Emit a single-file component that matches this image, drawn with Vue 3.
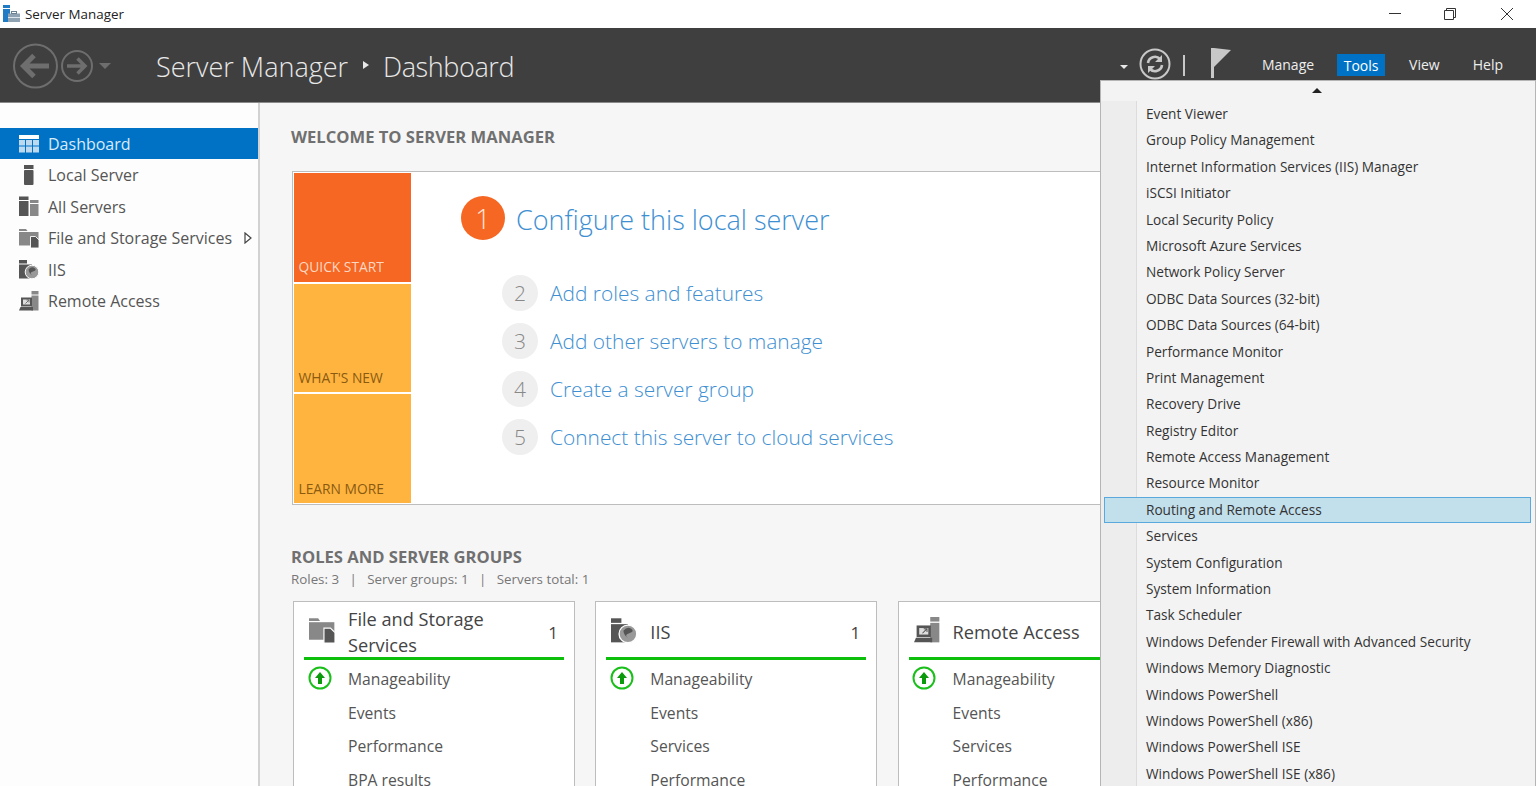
<script setup>
const navItems = [
  { label: 'Dashboard', icon: 'dash', active: true },
  { label: 'Local Server', icon: 'local' },
  { label: 'All Servers', icon: 'all' },
  { label: 'File and Storage Services', icon: 'file', arrow: true },
  { label: 'IIS', icon: 'iis' },
  { label: 'Remote Access', icon: 'remote' }
]
const tiles = [
  { label: 'QUICK START', cls: 'orange' },
  { label: "WHAT'S NEW", cls: 'amber' },
  { label: 'LEARN MORE', cls: 'amber' }
]
const steps = [
  { n: 2, text: 'Add roles and features' },
  { n: 3, text: 'Add other servers to manage' },
  { n: 4, text: 'Create a server group' },
  { n: 5, text: 'Connect this server to cloud services' }
]
const cards = [
  { title: 'File and Storage Services', icon: 'file', count: '1', rows: ['Manageability', 'Events', 'Performance', 'BPA results'] },
  { title: 'IIS', icon: 'iis', count: '1', rows: ['Manageability', 'Events', 'Services', 'Performance'] },
  { title: 'Remote Access', icon: 'remote', count: '', rows: ['Manageability', 'Events', 'Services', 'Performance'] }
]
const tools = [
  'Event Viewer', 'Group Policy Management', 'Internet Information Services (IIS) Manager', 'iSCSI Initiator',
  'Local Security Policy', 'Microsoft Azure Services', 'Network Policy Server', 'ODBC Data Sources (32-bit)',
  'ODBC Data Sources (64-bit)', 'Performance Monitor', 'Print Management', 'Recovery Drive', 'Registry Editor',
  'Remote Access Management', 'Resource Monitor', 'Routing and Remote Access', 'Services', 'System Configuration',
  'System Information', 'Task Scheduler', 'Windows Defender Firewall with Advanced Security',
  'Windows Memory Diagnostic', 'Windows PowerShell', 'Windows PowerShell (x86)', 'Windows PowerShell ISE',
  'Windows PowerShell ISE (x86)'
]
</script>

<template>
  <div class="app">
    <svg width="0" height="0" class="defs">
      <defs>
        <symbol id="i-dash" viewBox="0 0 20 20">
          <rect x="0" y="1" width="20" height="4" fill="#fff"/>
          <g fill="#bcd9ef">
            <rect x="0" y="6" width="6" height="5.5"/><rect x="7" y="6" width="6" height="5.5"/><rect x="14" y="6" width="6" height="5.5"/>
            <rect x="0" y="12.5" width="6" height="6"/><rect x="7" y="12.5" width="6" height="6"/><rect x="14" y="12.5" width="6" height="6"/>
          </g>
        </symbol>
        <symbol id="i-local" viewBox="0 0 20 20">
          <rect x="5" y="0" width="9.500" height="4" fill="#555"/><rect x="5" y="5" width="9.500" height="15" rx="1" fill="#555"/>
        </symbol>
        <symbol id="i-all" viewBox="0 0 20 20">
          <rect x="0" y="0.500" width="9.500" height="3.500" fill="#555"/><rect x="0" y="5" width="9.500" height="15" fill="#555"/>
          <rect x="11" y="4" width="8.500" height="3" fill="#888"/><rect x="11" y="8" width="8.500" height="12" fill="#888"/>
        </symbol>
        <symbol id="i-file" viewBox="0 0 20 20">
          <path d="M0 1h7l1.500 2H0z" fill="#888"/><path d="M0 4h19.500v13.500H0z" fill="#888"/>
          <path d="M11.500 8.500h5l3.500 3.500v8h-8.500z" fill="#555" stroke="#fdfdfd" stroke-width=".9"/>
        </symbol>
        <symbol id="i-iis" viewBox="0 0 20 20">
          <rect x="0" y="1" width="8" height="3.500" fill="#555"/><rect x="0" y="5.500" width="13" height="14" fill="#555"/>
          <circle cx="13" cy="13" r="6.800" fill="#999" stroke="#fdfdfd"/>
          <path d="M9.500 10.500q3-3.500 6-1.500t-1.500 3.500-.5 4q-3.500-2-4-6z" fill="#555"/>
        </symbol>
        <symbol id="i-remote" viewBox="0 0 20 20">
          <rect x="12.500" y="0" width="7" height="3.500" fill="#888"/><rect x="12.500" y="4.500" width="7" height="15" fill="#888"/>
          <path d="M2 6.500h11v9H2z" fill="#555"/><rect x="4" y="8.500" width="7" height="5" fill="#ddd"/>
          <path d="M1.500 16h12.500v3.500H0z" fill="#555"/><path d="M6.500 12.500l3-3M7.500 9h2.500v2.500" stroke="#555" fill="none" stroke-width=".8"/>
        </symbol>
      </defs>
    </svg>

    <div class="titlebar">
      <svg class="app-icon" width="18" height="18" viewBox="0 0 18 18">
        <rect x="1" y="0" width="7" height="3" fill="#1f7bc4"/>
        <rect x="1" y="4" width="7" height="13" fill="#1f7bc4"/>
        <rect x="6" y="8.500" width="12" height="8.500" fill="#8fa3b3"/>
        <rect x="9.500" y="6.500" width="5" height="2" fill="none" stroke="#6b8294"/>
        <rect x="6" y="12" width="12" height="1" fill="#dfe7ee"/>
      </svg>
      <span class="app-name">Server Manager</span>
      <div class="winbtns">
        <svg width="14" height="14" viewBox="0 0 14 14"><path d="M1 6.500h12" stroke="#333"/></svg>
        <svg width="14" height="14" viewBox="0 0 14 14"><path d="M1.500 3.500h9v9h-9zM3.500 3.500v-2h9v9h-2" fill="none" stroke="#333"/></svg>
        <svg class="close-ico" width="14" height="14" viewBox="0 0 14 14"><path d="M1 1l12 12M13 1L1 13" stroke="#333" fill="none"/></svg>
      </div>
    </div>

    <header class="header">
      <svg class="nav-back" width="100" height="50" viewBox="0 0 100 50">
        <g fill="none" stroke="#6e6e6e">
          <circle cx="22.500" cy="25" r="21.500" stroke-width="2"/>
          <path d="M36 25H12M21 14.500L10.500 25 21 35.500" stroke-width="5"/>
          <circle cx="64" cy="25" r="15" stroke-width="2"/>
          <path d="M54 25h17M64.500 17.500L72 25l-7.500 7.500" stroke-width="3.500"/>
        </g>
        <path d="M86 22h12l-6 6z" fill="#6e6e6e"/>
      </svg>
      <h1 class="crumb">
        <span>Server Manager</span>
        <i class="crumb-sep"></i>
        <span class="crumb-last">Dashboard</span>
      </h1>
      <div class="tools-right">
        <i class="dd"></i>
        <svg class="refresh" width="32" height="32" viewBox="0 0 32 32">
          <circle cx="16" cy="16" r="14.500" fill="none" stroke="#c8c8c8" stroke-width="2"/>
          <path d="M9 15a7 7 0 0 1 12-4M23 17a7 7 0 0 1-12 4" fill="none" stroke="#c8c8c8" stroke-width="2.600"/>
          <path d="M23 7v7h-7zM9 25v-7h7z" fill="#c8c8c8"/>
        </svg>
        <i class="vsep"></i>
        <svg class="flag" width="22" height="30" viewBox="0 0 22 30">
          <path d="M1 0h3v30H1z" fill="#c8c8c8"/><path d="M4 0l17 2L4 19z" fill="#c8c8c8"/>
        </svg>
        <nav class="menu">
          <span class="m-manage">Manage</span><span class="on">Tools</span><span class="m-view">View</span><span>Help</span>
        </nav>
      </div>
    </header>

    <div class="body">
      <aside class="side">
        <div v-for="n in navItems" :key="n.label" class="nav" :class="{ active: n.active }">
          <svg class="nav-ico" width="20" height="20"><use :href="'#i-' + n.icon"/></svg>
          <span>{{ n.label }}</span>
          <svg v-if="n.arrow" class="nav-arrow" width="8" height="12" viewBox="0 0 8 12"><path d="M1 1l6 5-6 5z" fill="#fff" stroke="#444" stroke-width="1.200"/></svg>
        </div>
      </aside>

      <main class="main">
        <h2 class="h-welcome">WELCOME TO SERVER MANAGER</h2>
        <section class="welcome">
          <div class="tiles">
            <div v-for="t in tiles" :key="t.label" class="tile" :class="t.cls">{{ t.label }}</div>
          </div>
          <div class="steps">
            <div class="step-main">
              <span class="num-big">1</span>
              <span class="big-link">Configure this local server</span>
            </div>
            <div v-for="s in steps" :key="s.n" class="step">
              <span class="num">{{ s.n }}</span>
              <span class="link">{{ s.text }}</span>
            </div>
          </div>
        </section>

        <h2 class="h-roles">ROLES AND SERVER GROUPS</h2>
        <p class="sub">Roles: 3 &nbsp; | &nbsp; Server groups: 1 &nbsp; | &nbsp; Servers total: 1</p>

        <div class="cards">
          <article v-for="c in cards" :key="c.title" class="card">
            <div class="card-head">
              <svg class="card-ico" width="26" height="26"><use :href="'#i-' + c.icon"/></svg>
              <span class="card-title">{{ c.title }}</span>
              <span class="card-count">{{ c.count }}</span>
            </div>
            <div v-for="(r, i) in c.rows" :key="r" class="row">
              <svg v-if="i === 0" class="ok" width="24" height="24" viewBox="0 0 24 24">
                <circle cx="12" cy="12" r="10.500" fill="#fff" stroke="#1bbf1b" stroke-width="2"/>
                <path d="M12 6l5 6h-3v6h-4v-6H7z" fill="#0b9a0b"/>
              </svg>
              <span>{{ r }}</span>
            </div>
          </article>
        </div>
      </main>
    </div>

    <div class="dropdown">
      <div class="scroll-up"><i></i></div>
      <ul class="list">
        <li v-for="t in tools" :key="t" :class="{ hover: t === 'Routing and Remote Access' }">{{ t }}</li>
      </ul>
    </div>
  </div>
</template>

<style>
html, body { margin: 0; overflow: hidden; background: #fff; }
</style>

<style scoped>
.app {
  position: relative;
  width: 1536px;
  height: 786px;
  overflow: hidden;
  display: flex;
  flex-direction: column;
  font-family: "Open Sans", "Noto Sans", sans-serif;
  color: #444;
  background: #f6f6f6;
}
.defs { position: absolute; }
.titlebar {
  height: 28px;
  flex: none;
  display: flex;
  align-items: center;
  background: #fff;
  color: #222;
  font-size: 13.400px;
}
.app-icon { margin-left: 2px; margin-top: 0; }
.app-name { margin-left: 5px; }
.winbtns { margin-left: auto; display: flex; gap: 41px; padding-right: 22px; }
.close-ico { margin-left: 2px; }
.header {
  height: 75px;
  flex: none;
  box-sizing: border-box;
  display: flex;
  align-items: center;
  background: #3f3f3f;
  border-bottom: 1px solid #8a8a8a;
  padding: 0 33px 0 13px;
}
.nav-back { flex: none; margin-top: 1px; }
.crumb {
  margin: 2px 0 0 43px;
  display: flex;
  align-items: center;
  font-size: 27px;
  font-weight: 300;
  color: #e8e8e8;
}
.crumb-sep {
  width: 0; height: 0;
  margin: -2px 14px 0 15px;
  border-left: 6px solid #e8e8e8;
  border-top: 4px solid transparent;
  border-bottom: 4px solid transparent;
}
.crumb-last { letter-spacing: -0.4px; }
.tools-right { margin-left: auto; display: flex; align-items: center; }
.dd {
  width: 0; height: 0;
  border-top: 4px solid #e8e8e8;
  border-left: 4px solid transparent;
  border-right: 4px solid transparent;
  margin-right: 11px;
  margin-top: 3px;
}
.refresh { margin-top: -3px; }
.vsep { width: 2px; height: 21px; background: #c8c8c8; margin: 0 25px 0 12px; }
.flag { margin-top: -5px; margin-right: 30px; }
.menu { display: flex; align-items: center; font-size: 14px; color: #eee; margin-top: 0; }
.menu span { height: 22px; line-height: 22px; }
.menu .m-manage { margin-right: 23px; }
.menu .on { width: 48px; background: #0072c6; color: #fff; text-align: center; margin-right: 24px; line-height: 23px; }
.menu .m-view { margin-right: 33px; }

.body { flex: 1; min-height: 0; display: flex; }
.side {
  width: 260px;
  flex: none;
  box-sizing: border-box;
  background: #fdfdfd;
  border-right: 2px solid #d2d2d2;
  padding-top: 25px;
}
.nav {
  height: 31.400px;
  display: flex;
  align-items: center;
  font-size: 16px;
  color: #555;
}
.nav span { position: relative; top: 0.400px; }
.nav-ico { margin-left: 19px; margin-right: 9px; flex: none; }
.nav.active { background: #0072c6; color: #d9ebf8; }
.nav-arrow { margin-left: 12px; }

.main { flex: 1; min-width: 0; padding: 23px 0 0 32px; }
.h-welcome, .h-roles { margin: 0 0 0 -1px; font-size: 16.600px; font-weight: 700; color: #707070; line-height: 22px; }
.welcome {
  margin-top: 23px;
  height: 334px;
  box-sizing: border-box;
  display: flex;
  background: #fff;
  border: 1px solid #bdbdbd;
  padding: 1px;
}
.tiles { width: 117px; flex: none; display: flex; flex-direction: column; gap: 2px; }
.tile {
  height: 108.700px;
  box-sizing: border-box;
  display: flex;
  align-items: flex-end;
  padding: 0 0 5.500px 4.500px;
  font-size: 13.800px;
}
.orange { background: #f56723; color: #fbd8c4; }
.amber { background: #ffb440; color: #8a5a10; }
.steps { padding: 23px 0 0 50px; }
.step-main { display: flex; align-items: center; gap: 11px; height: 44px; margin-bottom: 29px; }
.num-big {
  width: 44px; height: 44px;
  border-radius: 50%;
  background: #f56723;
  color: #fde3d5;
  font-size: 27px;
  font-weight: 300;
  display: flex; align-items: center; justify-content: center;
}
.big-link { font-size: 27px; font-weight: 300; color: #3e8fd2; position: relative; top: 1px; }
.step { display: flex; align-items: center; height: 48px; margin-left: 41px; gap: 12px; }
.num {
  width: 36px; height: 36px;
  border-radius: 50%;
  background: #efefef;
  color: #888;
  font-size: 21px;
  font-weight: 300;
  display: flex; align-items: center; justify-content: center;
}
.link { font-size: 20.900px; font-weight: 300; color: #3e8fd2; }

.h-roles { margin-top: 41px; }
.sub { margin: 0 0 0 -1px; font-size: 13.350px; color: #777; line-height: 22px; }
.cards { display: flex; gap: 20.300px; margin-top: 11px; margin-left: 1px; }
.card {
  width: 282px;
  height: 300px;
  flex: none;
  box-sizing: border-box;
  background: #fff;
  border: 1px solid #bdbdbd;
  padding: 0 10px;
}
.card-head {
  height: 58px;
  box-sizing: border-box;
  display: flex;
  align-items: center;
  padding-top: 4px;
  border-bottom: 3px solid #0bbf0b;
  font-size: 18.200px;
  color: #444;
}
.card-ico { margin-left: 5px; margin-right: 13px; flex: none; margin-top: -4px; }
.card-title { width: 180px; line-height: 26px; }
.card-count { margin-left: auto; margin-right: 6px; font-size: 17px; position: relative; top: 1px; }
.row {
  position: relative;
  height: 33.500px;
  padding-left: 44px;
  display: flex;
  align-items: center;
  font-size: 15.700px;
  color: #555;
  top: 2.400px;
}
.ok { position: absolute; left: 3.500px; top: 3.600px; }

.dropdown {
  position: absolute;
  left: 1100px;
  top: 80px;
  width: 436px;
  height: 720px;
  box-sizing: border-box;
  border: 1px solid #b5b5b5;
  background: #f3f3f3;
}
.scroll-up { height: 20px; position: relative; }
.scroll-up i {
  position: absolute;
  left: 211px;
  top: 7px;
  border-bottom: 5px solid #222;
  border-left: 5px solid transparent;
  border-right: 5px solid transparent;
}
.list {
  margin: 0;
  padding: 0 0 0 36px;
  list-style: none;
  position: relative;
  background: linear-gradient(to right, #ededed 0, #ededed 35px, #dcdcdc 35px, #dcdcdc 36px, transparent 36px);
}
.list li {
  height: 26.400px;
  line-height: 26px;
  padding-left: 9px;
  font-size: 13.650px;
  color: #333;
  white-space: nowrap;
  box-sizing: border-box;
}
.list li.hover {
  position: relative;
  margin-left: -33px;
  margin-right: 4px;
  padding-left: 41px;
  line-height: 24px;
  background: #c2dfec;
  border: 1px solid #5aa9dd;
}
</style>
